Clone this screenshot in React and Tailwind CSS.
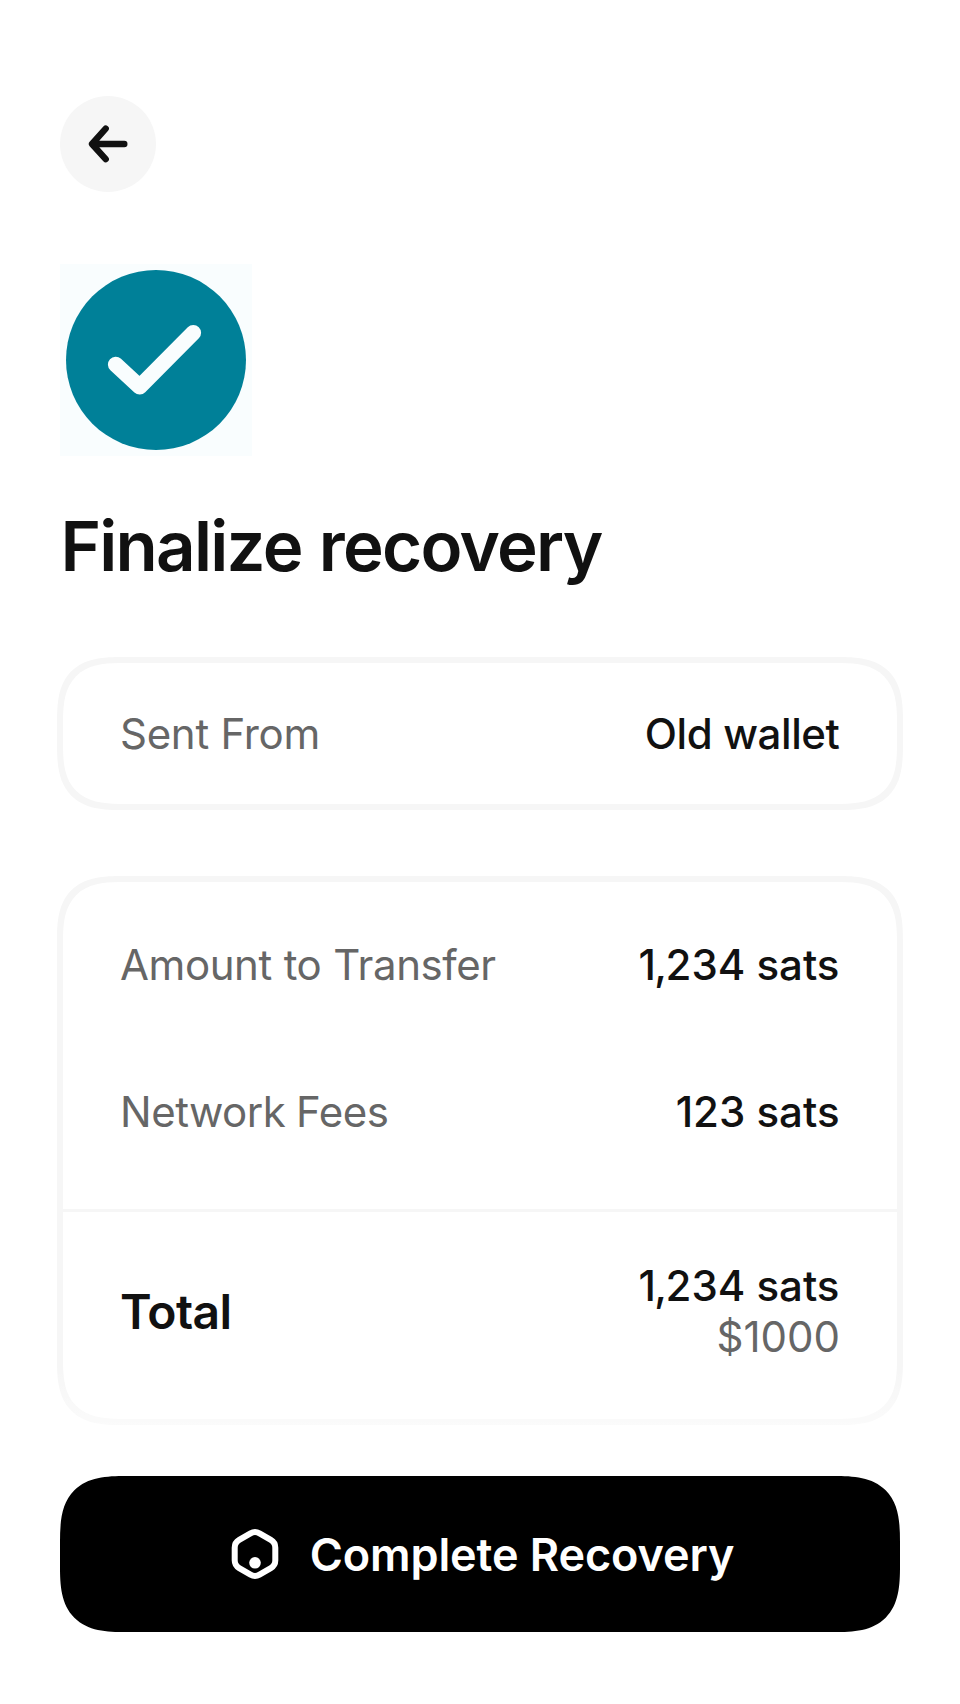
function Row({ label, labelClass, value }) {
  return (
    <div className="flex h-[147px] items-center justify-between px-[57px]">
      <span className={"text-[#666666] " + labelClass}>{label}</span>
      <span className="pr-[0.5px] font-medium">{value}</span>
    </div>
  );
}

function Card({ className, children }) {
  return (
    <section
      className={
        "-mx-[3px] rounded-[66px] border-[6px] border-[#f6f6f6] text-[42px] leading-[51px] [corner-shape:superellipse(1.5)] " +
        className
      }
    >
      {children}
    </section>
  );
}

function Sats() {
  return (
    <>
      <span className="tracking-[-1.6px]">1,</span>234 sats
    </>
  );
}

export default function App() {
  return (
    <main className="relative flex h-[1704px] w-[960px] flex-col bg-white px-[60px] pt-24 font-['Inter',sans-serif] text-[#111111]">
      <button aria-label="Back" className="size-24 rounded-full bg-[#f6f6f6]">
        <svg viewBox="0 0 96 96" className="size-24" fill="none" stroke="#111111" strokeWidth="6.4" strokeLinecap="round" strokeLinejoin="round">
          <path d="M45.7 32.7 32 48l13.7 15.2M33 48h31.3" />
        </svg>
      </button>

      <svg viewBox="0 0 192 192" className="mt-[72px] size-48 bg-[#f9fdfe]" fill="none">
        <circle cx="96" cy="96" r="90" fill="#008098" />
        <path d="M55.7 100.5 79.7 122.8 133.3 68.8" stroke="#f9fdfe" strokeWidth="15.6" strokeLinecap="round" strokeLinejoin="round" />
      </svg>

      <h1 className="mt-[48px] pl-[0.5px] text-[69px] leading-[84px] font-semibold tracking-[-1.75px] [word-spacing:1.5px]">
        Finalize recovery
      </h1>

      <Card className="mt-[69px] flex h-[153px] flex-col justify-center">
        <Row label="Sent From" labelClass="tracking-[-0.28px]" value={<span className="tracking-[-0.4px]">Old wallet</span>} />
      </Card>

      <Card className="mt-[66px] h-[549px] pt-[9px]">
        <Row label="Amount to Transfer" labelClass="tracking-[-0.42px] [word-spacing:0.5px]" value={<Sats />} />
        <Row label="Network Fees" labelClass="tracking-[-0.5px] [word-spacing:-0.5px]" value="123 sats" />
        <div className="mt-6 flex h-[201px] items-center justify-between border-t-[3px] border-[#f6f6f6] px-[57px]">
          <span className="pt-[2px] text-[48px] leading-[60px] font-semibold tracking-[-0.6px]">Total</span>
          <div className="flex flex-col items-end">
            <span className="pr-[0.5px] font-medium">
              <Sats />
            </span>
            <span className="text-[#666666]">$1000</span>
          </div>
        </div>
      </Card>

      <div className="absolute inset-x-0 top-[1368px] h-[108px] bg-linear-to-b from-white/0 to-white" />

      <button className="mt-[51px] flex h-[156px] items-center justify-center rounded-[66px] bg-black pt-[2px] pr-[7px] text-[45px] leading-[54px] font-semibold tracking-[-0.1px] text-white [corner-shape:superellipse(1.5)]">
        <svg viewBox="0 0 72 72" className="mr-[19px] mb-[2px] size-[72px]" fill="none">
          <path
            d="M31.5 15.3Q36 12.7 40.5 15.3L51.8 21.9Q56.3 24.5 56.3 29.7V42.3Q56.3 47.5 51.8 50.1L40.5 56.7Q36 59.3 31.5 56.7L20.2 50.1Q15.7 47.5 15.7 42.3V29.7Q15.7 24.5 20.2 21.9Z"
            stroke="white"
            strokeWidth="6"
          />
          <circle cx="36" cy="44.8" r="5.8" fill="white" />
        </svg>
        Complete Recovery
      </button>
    </main>
  );
}
